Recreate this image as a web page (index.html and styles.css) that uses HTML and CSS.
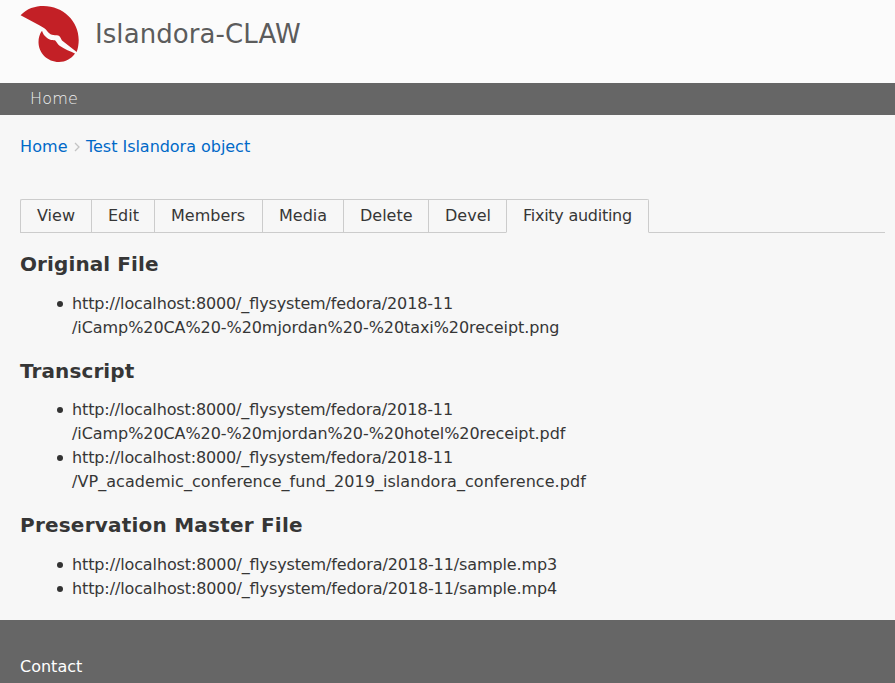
FILE: index.html
```
<!DOCTYPE html>
<html lang="en">
<head>
<meta charset="utf-8">
<title>Islandora-CLAW</title>
<link rel="stylesheet" href="styles.css">
</head>
<body>
<header class="site-header">
  <svg class="logo" viewBox="0 0 60 58" width="60" height="58" aria-hidden="true">
    <path fill="#c32026" d="M.6 9.300C7 2.500 15 0 23.500 0C43 0 58.700 15 58.700 34C58.700 38 58 42.500 56.700 46L42 34.500C40.500 32 40 29.500 37 29.300C34 29 32.500 29.500 30.500 28.300C27.500 26.500 27 24 24 22L19.300 19.300Z"/>
    <path fill="#c32026" d="M22 24.700C23 27.500 24 29.500 26 31C29 34 31.500 34 35 34.300C37 36 37.500 38.500 40 40C45 43.500 50 45 55 47.500C51 53 45.500 56 39 56C27.500 56 18.500 47 18.500 36C18.500 32 19.500 28 22 24.700Z"/>
  </svg>
  <span class="site-name">Islandora-CLAW</span>
</header>
<nav class="main-menu"><a>Home</a></nav>
<main class="content">
  <nav class="breadcrumb"><a>Home</a><svg width="6" height="10" viewBox="0 0 6 10"><path d="M1 1l4 4-4 4" fill="none" stroke="#c4c4c4" stroke-width="1.300"/></svg><a>Test Islandora object</a></nav>
  <nav class="tabs"><a>View</a><a>Edit</a><a>Members</a><a>Media</a><a>Delete</a><a>Devel</a><a class="active">Fixity auditing</a></nav>
  <h3>Original File</h3>
  <ul><li><span class="host">http://localhost:8000/_flysystem/fedora/2018-11</span><br><span class="receipt">/iCamp%20CA%20-%20mjordan%20-%20taxi%20receipt.png</span></li></ul>
  <h3>Transcript</h3>
  <ul><li><span class="host">http://localhost:8000/_flysystem/fedora/2018-11</span><br><span class="receipt">/iCamp%20CA%20-%20mjordan%20-%20hotel%20receipt.pdf</span></li><li><span class="host">http://localhost:8000/_flysystem/fedora/2018-11</span><br><span class="fund">/VP_academic_conference_fund_2019_islandora_conference.pdf</span></li></ul>
  <h3 class="wide">Preservation Master File</h3>
  <ul><li><span class="sample">http://localhost:8000/_flysystem/fedora/2018-11/sample.mp3</span></li><li><span class="sample">http://localhost:8000/_flysystem/fedora/2018-11/sample.mp4</span></li></ul>
</main>
<footer class="site-footer"><a>Contact</a></footer>
</body>
</html>
```
FILE: styles.css
```
* { box-sizing: border-box; }
body { margin: 0; height: 683px; overflow: hidden; display: flex; flex-direction: column; background: #f7f7f7; color: #363636; font: 16px/24px "DejaVu Sans", sans-serif; }
.site-header { height: 83px; padding: 6px 20px 0; display: flex; gap: 15px; background: #fbfbfb; }
.logo { display: block; overflow: visible; }
.site-name { font-size: 26px; line-height: 56px; letter-spacing: .08px; color: #5c5c5c; }
.main-menu { height: 32px; padding: 0 30px; line-height: 31px; background: #666; color: #eee; font-weight: 200; letter-spacing: .2px; }
.content { height: 505px; padding: 20px 10px 0 20px; }
.breadcrumb { display: flex; align-items: center; gap: 6px; color: #0069c8; }
.breadcrumb a { letter-spacing: -.03px; }
.breadcrumb a:first-child { width: 48px; letter-spacing: .15px; }
.tabs { display: grid; grid-template-columns: 71px 63px 108px 81px 85px 78px 143px; margin-top: 40px; height: 34px; border-bottom: 1px solid #ccc; }
.tabs a { height: 34px; padding-left: 16px; line-height: 32px; white-space: nowrap; border: 1px solid #ccc; border-right: 0; }
.tabs a:first-child { border-top-left-radius: 2px; }
.tabs .active { border-right: 1px solid #ccc; border-bottom-color: #f7f7f7; border-top-right-radius: 2px; letter-spacing: -.26px; }
h3 { margin: 19px 0 15.5px; font-size: 20px; line-height: 24px; letter-spacing: .1px; }
.wide { letter-spacing: .22px; }
ul { margin: 0; padding-left: 52px; list-style: none; }
li { position: relative; font-feature-settings: "liga" 1; }
li::before { content: ""; position: absolute; left: -15px; top: 9px; width: 6px; height: 6px; border-radius: 50%; background: #333; }
.host { letter-spacing: -.135px; }
.receipt { letter-spacing: -.07px; }
.fund { letter-spacing: .055px; }
.sample { letter-spacing: -.118px; }
.site-footer { height: 63px; padding: 35px 20px 0; background: #666; color: #fff; }
```
